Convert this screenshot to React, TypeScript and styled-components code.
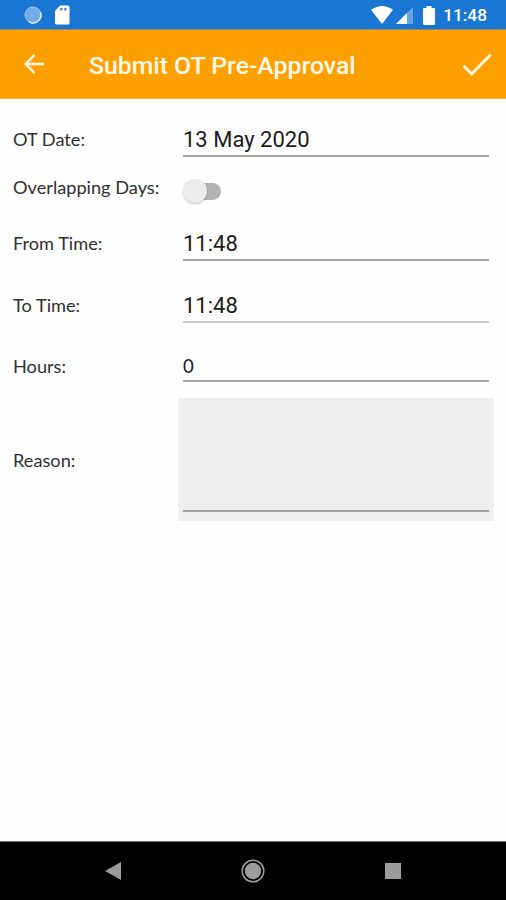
import React from "react";
import styled, { createGlobalStyle } from "styled-components";

const GlobalStyle = createGlobalStyle`
  * { box-sizing: border-box; }
  body { margin: 0; background: #fff; }
`;

const Screen = styled.div`
  display: flex;
  flex-direction: column;
  width: 506px;
  height: 900px;
  background: #fefefe;
  overflow: hidden;
  font-family: Roboto, sans-serif;
`;

const StatusBar = styled.header`
  display: flex;
  align-items: center;
  height: 30px;
  flex: none;
  padding: 0 19px 0 24px;
  background: #1976d2;
  border-bottom: 1px solid #8f8a66;
  color: #fff;
`;

const StatusGroup = styled.div<{ $end?: boolean }>`
  display: flex;
  align-items: center;
  height: 30px;
  padding-top: 1px;
  margin-left: ${(p) => (p.$end ? "auto" : "0")};
`;

const Icon = styled.svg<{ $gap?: number }>`
  display: block;
  flex: none;
  margin-left: ${(p) => p.$gap ?? 0}px;
`;

const Clock = styled.span`
  margin-left: 8px;
  font-size: 17.3px;
  font-weight: 500;
  line-height: 30px;
`;

const AppBar = styled.div`
  display: flex;
  align-items: center;
  height: 69px;
  flex: none;
  padding: 0 14px 0 24px;
  background: #ffa000;
  border-bottom: 1px solid #ffb63c;
`;

const Title = styled.h1`
  margin: 3px auto 0 44px;
  color: #fff8ec;
  font-size: 24.8px;
  font-weight: 500;
  line-height: 32px;
  white-space: nowrap;
`;

const IconButton = styled.button`
  display: flex;
  padding: 0;
  border: 0;
  background: none;
`;

const Form = styled.main`
  flex: 1;
`;

const Row = styled.div<{ $height: number }>`
  display: grid;
  grid-template-columns: 170px 306px;
  align-items: end;
  height: ${(p) => p.$height}px;
  padding-left: 13px;
`;

const Label = styled.label<{ $lift: number }>`
  margin-bottom: ${(p) => p.$lift}px;
  color: #303030;
  font-family: Lato, sans-serif;
  font-size: 18.2px;
  line-height: 24px;
  white-space: nowrap;
`;

const Field = styled.div<{ $soft?: boolean }>`
  padding-bottom: 1px;
  border-bottom: ${(p) => (p.$soft ? "2px solid #c9c9c9" : "2px solid #a6a6a6")};
  color: #1c1c1c;
  font-size: 22px;
  line-height: 28px;
  white-space: nowrap;
`;

const HoursField = styled(Field)`
  font-family: Lato, sans-serif;
  font-size: 18.5px;
  padding-bottom: 0;
`;

const Switch = styled.div`
  display: flex;
  align-items: center;
  width: 39px;
  height: 26px;
  margin-bottom: 6px;
`;

const Thumb = styled.span`
  width: 24px;
  height: 24px;
  flex: none;
  border-radius: 50%;
  background: #ececec;
  box-shadow: 0 1px 2px rgba(0, 0, 0, 0.24);
  z-index: 1;
`;

const Track = styled.span`
  width: 27px;
  height: 17px;
  flex: none;
  margin-left: -13px;
  border-radius: 9px;
  background: #b2b2b2;
`;

const ReasonRow = styled.div`
  display: grid;
  grid-template-columns: 165px 316px;
  align-items: center;
  margin-top: 16px;
  padding-left: 13px;
`;

const ReasonBox = styled.div`
  display: flex;
  align-items: flex-end;
  height: 123px;
  padding: 0 5px 9px;
  background: #eee;
`;

const ReasonLine = styled.div`
  flex: 1;
  height: 2px;
  background: #a0a0a0;
`;

const NavBar = styled.nav`
  display: flex;
  align-items: center;
  justify-content: space-between;
  height: 59px;
  flex: none;
  padding: 0 105px 0 105px;
  background: #000;
  border-top: 1px solid #777;
`;

export default function App() {
  return (
    <Screen>
      <GlobalStyle />
      <StatusBar>
        <StatusGroup>
          <Icon width="18" height="18" viewBox="0 0 18 18">
            <circle cx="9" cy="9" r="8" fill="#73ade8" stroke="#94c1ee" />
            <path d="M16.6 6.5A8 8 0 0 1 5 15.9" fill="none" stroke="#e5f2ff" strokeWidth="1.4" />
          </Icon>
          <Icon $gap={13} width="15" height="20" viewBox="0 0 15 20">
            <path d="M5 .5h8A1.7 1.7 0 0 1 14.5 2v16a1.5 1.5 0 0 1-1.5 1.5H1.5A1.5 1.5 0 0 1 0 18V6z" fill="#fff" />
            <path d="M5.2 3h2.2v2.5H5.2zM9.3 3h2.2v2.5H9.3z" fill="#3e83d4" />
          </Icon>
        </StatusGroup>
        <StatusGroup $end>
          <Icon width="22" height="18" viewBox="0 0 22 18">
            <path d="M0 3.8Q11-3.8 22 3.8L11 18z" fill="#fff" />
          </Icon>
          <Icon $gap={3} width="17" height="17" viewBox="0 0 17 17">
            <path d="M17 0v17H0z" fill="#65a2df" />
            <path d="M11 6v11H0z" fill="#fff" />
          </Icon>
          <Icon $gap={10} width="12" height="19" viewBox="0 0 12 19">
            <path d="M3.5 0h5v2H11a1 1 0 0 1 1 1v14.5a1.5 1.5 0 0 1-1.5 1.5h-9A1.5 1.5 0 0 1 0 17.5V3a1 1 0 0 1 1-1h2.5z" fill="#fff" />
          </Icon>
          <Clock>11:48</Clock>
        </StatusGroup>
      </StatusBar>

      <AppBar>
        <IconButton aria-label="Back">
          <Icon width="21" height="20" viewBox="0 0 21 20">
            <path d="M20 10H2M10.5 1.2L1.7 10l8.8 8.8" fill="none" stroke="#fff6e6" strokeWidth="2.4" />
          </Icon>
        </IconButton>
        <Title>Submit OT Pre-Approval</Title>
        <IconButton aria-label="Submit">
          <Icon width="30" height="23" viewBox="0 0 30 23">
            <path d="M1.5 12.7l8.2 8.2L28.5 1.7" fill="none" stroke="#fff6e6" strokeWidth="2.9" />
          </Icon>
        </IconButton>
      </AppBar>

      <Form>
        <Row $height={58}>
          <Label $lift={6}>OT Date:</Label>
          <Field>13 May 2020</Field>
        </Row>
        <Row $height={53}>
          <Label $lift={11}>Overlapping Days:</Label>
          <Switch role="switch" aria-checked={false}>
            <Thumb />
            <Track />
          </Switch>
        </Row>
        <Row $height={51}>
          <Label $lift={6}>From Time:</Label>
          <Field>11:48</Field>
        </Row>
        <Row $height={62}>
          <Label $lift={6}>To Time:</Label>
          <Field $soft>11:48</Field>
        </Row>
        <Row $height={59}>
          <Label $lift={4}>Hours:</Label>
          <HoursField>0</HoursField>
        </Row>
        <ReasonRow>
          <Label $lift={0}>Reason:</Label>
          <ReasonBox>
            <ReasonLine />
          </ReasonBox>
        </ReasonRow>
      </Form>

      <NavBar>
        <Icon width="16" height="18" viewBox="0 0 16 18">
          <path d="M0 9L16 0v18z" fill="#9c9c9c" />
        </Icon>
        <Icon width="24" height="24" viewBox="0 0 24 24">
          <circle cx="12" cy="12" r="10.8" fill="none" stroke="#9c9c9c" strokeWidth="1.5" />
          <circle cx="12" cy="12" r="8.2" fill="#9c9c9c" />
        </Icon>
        <Icon width="16" height="16" viewBox="0 0 16 16">
          <path d="M0 0h16v16H0z" fill="#9c9c9c" />
        </Icon>
      </NavBar>
    </Screen>
  );
}
